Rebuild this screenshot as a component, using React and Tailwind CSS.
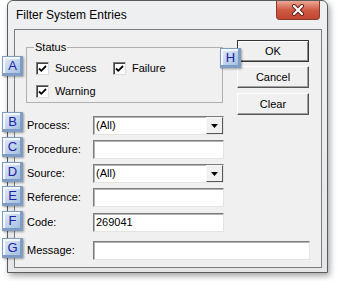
import React from 'react';

const font = { fontFamily: '"Liberation Sans", Arial, sans-serif' };

function Badge({ letter, className }) {
  return (
    <div
      className={`absolute w-[21px] h-[20px] flex items-center justify-center text-[13px] text-[#2020a8] bg-gradient-to-br from-[#e4eefa] to-[#9db9da] border border-[#7f9cc2] shadow-[inset_-2px_-2px_0_#7d9dc6,inset_2px_2px_0_#f4f8fd,1px_1px_2px_rgba(0,0,0,0.35)] ${className}`}
    >
      {letter}
    </div>
  );
}

function Check({ label, className = '' }) {
  return (
    <div className={`flex items-center ${className}`}>
      <div className="w-[13px] h-[13px] bg-white border border-t-[#7a7a7a] border-l-[#7a7a7a] border-b-[#dcdcdc] border-r-[#dcdcdc] shadow-[inset_1px_1px_0_#404040] flex items-center justify-center">
        <svg width="9" height="9" viewBox="0 0 9 9">
          <path d="M1 4.5 L3.3 6.8 L8 2" stroke="#000" strokeWidth="1.8" fill="none" />
        </svg>
      </div>
      <span className="ml-[6px] text-[11px] text-black leading-none">{label}</span>
    </div>
  );
}

function Field({ label, value = '', dropdown, wide, className = '' }) {
  return (
    <div className={`flex items-center ${className}`}>
      <span className="w-[66px] ml-[1px] text-[11px] text-black">{label}</span>
      <div
        className={`${wide ? 'w-[217px]' : 'w-[131px]'} h-[19px] bg-white border border-t-[#7a7a7a] border-l-[#7a7a7a] border-b-[#e3e3e3] border-r-[#e3e3e3] shadow-[inset_1px_1px_0_#b4b4b4] flex items-center`}
      >
        <span className="flex-1 pl-[2px] text-[11px] text-black leading-none">{value}</span>
        {dropdown && (
          <div className="w-[17px] h-[17px] bg-[#f0f0f0] border border-t-[#f8f8f8] border-l-[#f8f8f8] border-b-[#555] border-r-[#555] flex items-center justify-center">
            <svg width="7" height="4" viewBox="0 0 7 4">
              <path d="M0 0 H7 L3.5 4 Z" fill="#000" />
            </svg>
          </div>
        )}
      </div>
    </div>
  );
}

function Btn({ label, primary }) {
  return (
    <div
      className={`w-[72px] h-[22px] flex items-center justify-center bg-[#f0f0f0] text-[11px] text-black ${
        primary
          ? 'border border-[#333] shadow-[inset_1px_1px_0_#fff,inset_-1px_-1px_0_#8a8a8a]'
          : 'border border-t-[#fff] border-l-[#fff] border-b-[#555] border-r-[#555] shadow-[inset_-1px_-1px_0_#a0a0a0]'
      }`}
    >
      {label}
    </div>
  );
}

export default function App() {
  return (
    <div className="relative w-[338px] h-[281px] bg-white overflow-hidden" style={font}>
      {/* Window */}
      <div className="ml-[7px] w-[321px] h-[273px] rounded-t-[6px] border border-[#5a5a5a] bg-gradient-to-b from-[#eef0f2] to-[#e4e6e8] shadow-[2px_3px_6px_rgba(0,0,0,0.35)] flex flex-col">
        {/* Title bar */}
        <div className="h-[28px] flex items-start justify-between">
          <span className="mt-[5px] ml-[8px] text-[12px] text-black">Filter System Entries</span>
          <div className="mr-[7px] w-[44px] h-[19px] rounded-b-[4px] border border-t-0 border-[#8a3a2a] bg-gradient-to-b from-[#e9a895] via-[#cf5a44] to-[#c24430] flex items-center justify-center">
            <svg width="14" height="12" viewBox="0 0 14 12">
              <path d="M3 2 L11 10 M11 2 L3 10" stroke="#5a2018" strokeWidth="4" strokeLinecap="round" />
              <path d="M3 2 L11 10 M11 2 L3 10" stroke="#fff" strokeWidth="2.2" strokeLinecap="round" />
            </svg>
          </div>
        </div>

        {/* Client area */}
        <div className="ml-[6px] w-[308px] h-[239px] border border-[#7c7c7c] bg-[#f0f0f0] flex flex-col">
          <div className="flex items-start pt-[10px] pl-[11px]">
            {/* Status group */}
            <div className="relative mt-[7px] w-[197px] h-[56px] border border-[#b0b0b0] pl-[9px] pt-[14px]">
              <span className="absolute -top-[8px] left-[7px] px-[1px] bg-[#f0f0f0] text-[11px] text-black leading-[14px]">
                Status
              </span>
              <div className="flex">
                <Check label="Success" className="w-[77px]" />
                <Check label="Failure" />
              </div>
              <Check label="Warning" className="mt-[10px]" />
            </div>

            {/* Buttons */}
            <div className="ml-[14px] flex flex-col gap-[4px]">
              <Btn label="OK" primary />
              <Btn label="Cancel" />
              <div className="mt-[1px]">
                <Btn label="Clear" />
              </div>
            </div>
          </div>

          <div className="pl-[11px] flex flex-col">
            <Field label="Process:" value="(All)" dropdown className="mt-[1px]" />
            <Field label="Procedure:" className="mt-[5px]" />
            <Field label="Source:" value="(All)" dropdown className="mt-[5px]" />
            <Field label="Reference:" className="mt-[5px]" />
            <Field label="Code:" value="269041" className="mt-[6px]" />
            <Field label="Message:" wide className="mt-[9px]" />
          </div>
        </div>
      </div>

      {/* Callout badges */}
      <Badge letter="A" className="left-[2px] top-[56px]" />
      <Badge letter="H" className="left-[220px] top-[48px]" />
      <Badge letter="B" className="left-[2px] top-[112px]" />
      <Badge letter="C" className="left-[2px] top-[137px]" />
      <Badge letter="D" className="left-[2px] top-[162px]" />
      <Badge letter="E" className="left-[2px] top-[186px]" />
      <Badge letter="F" className="left-[2px] top-[211px]" />
      <Badge letter="G" className="left-[2px] top-[238px]" />
    </div>
  );
}
